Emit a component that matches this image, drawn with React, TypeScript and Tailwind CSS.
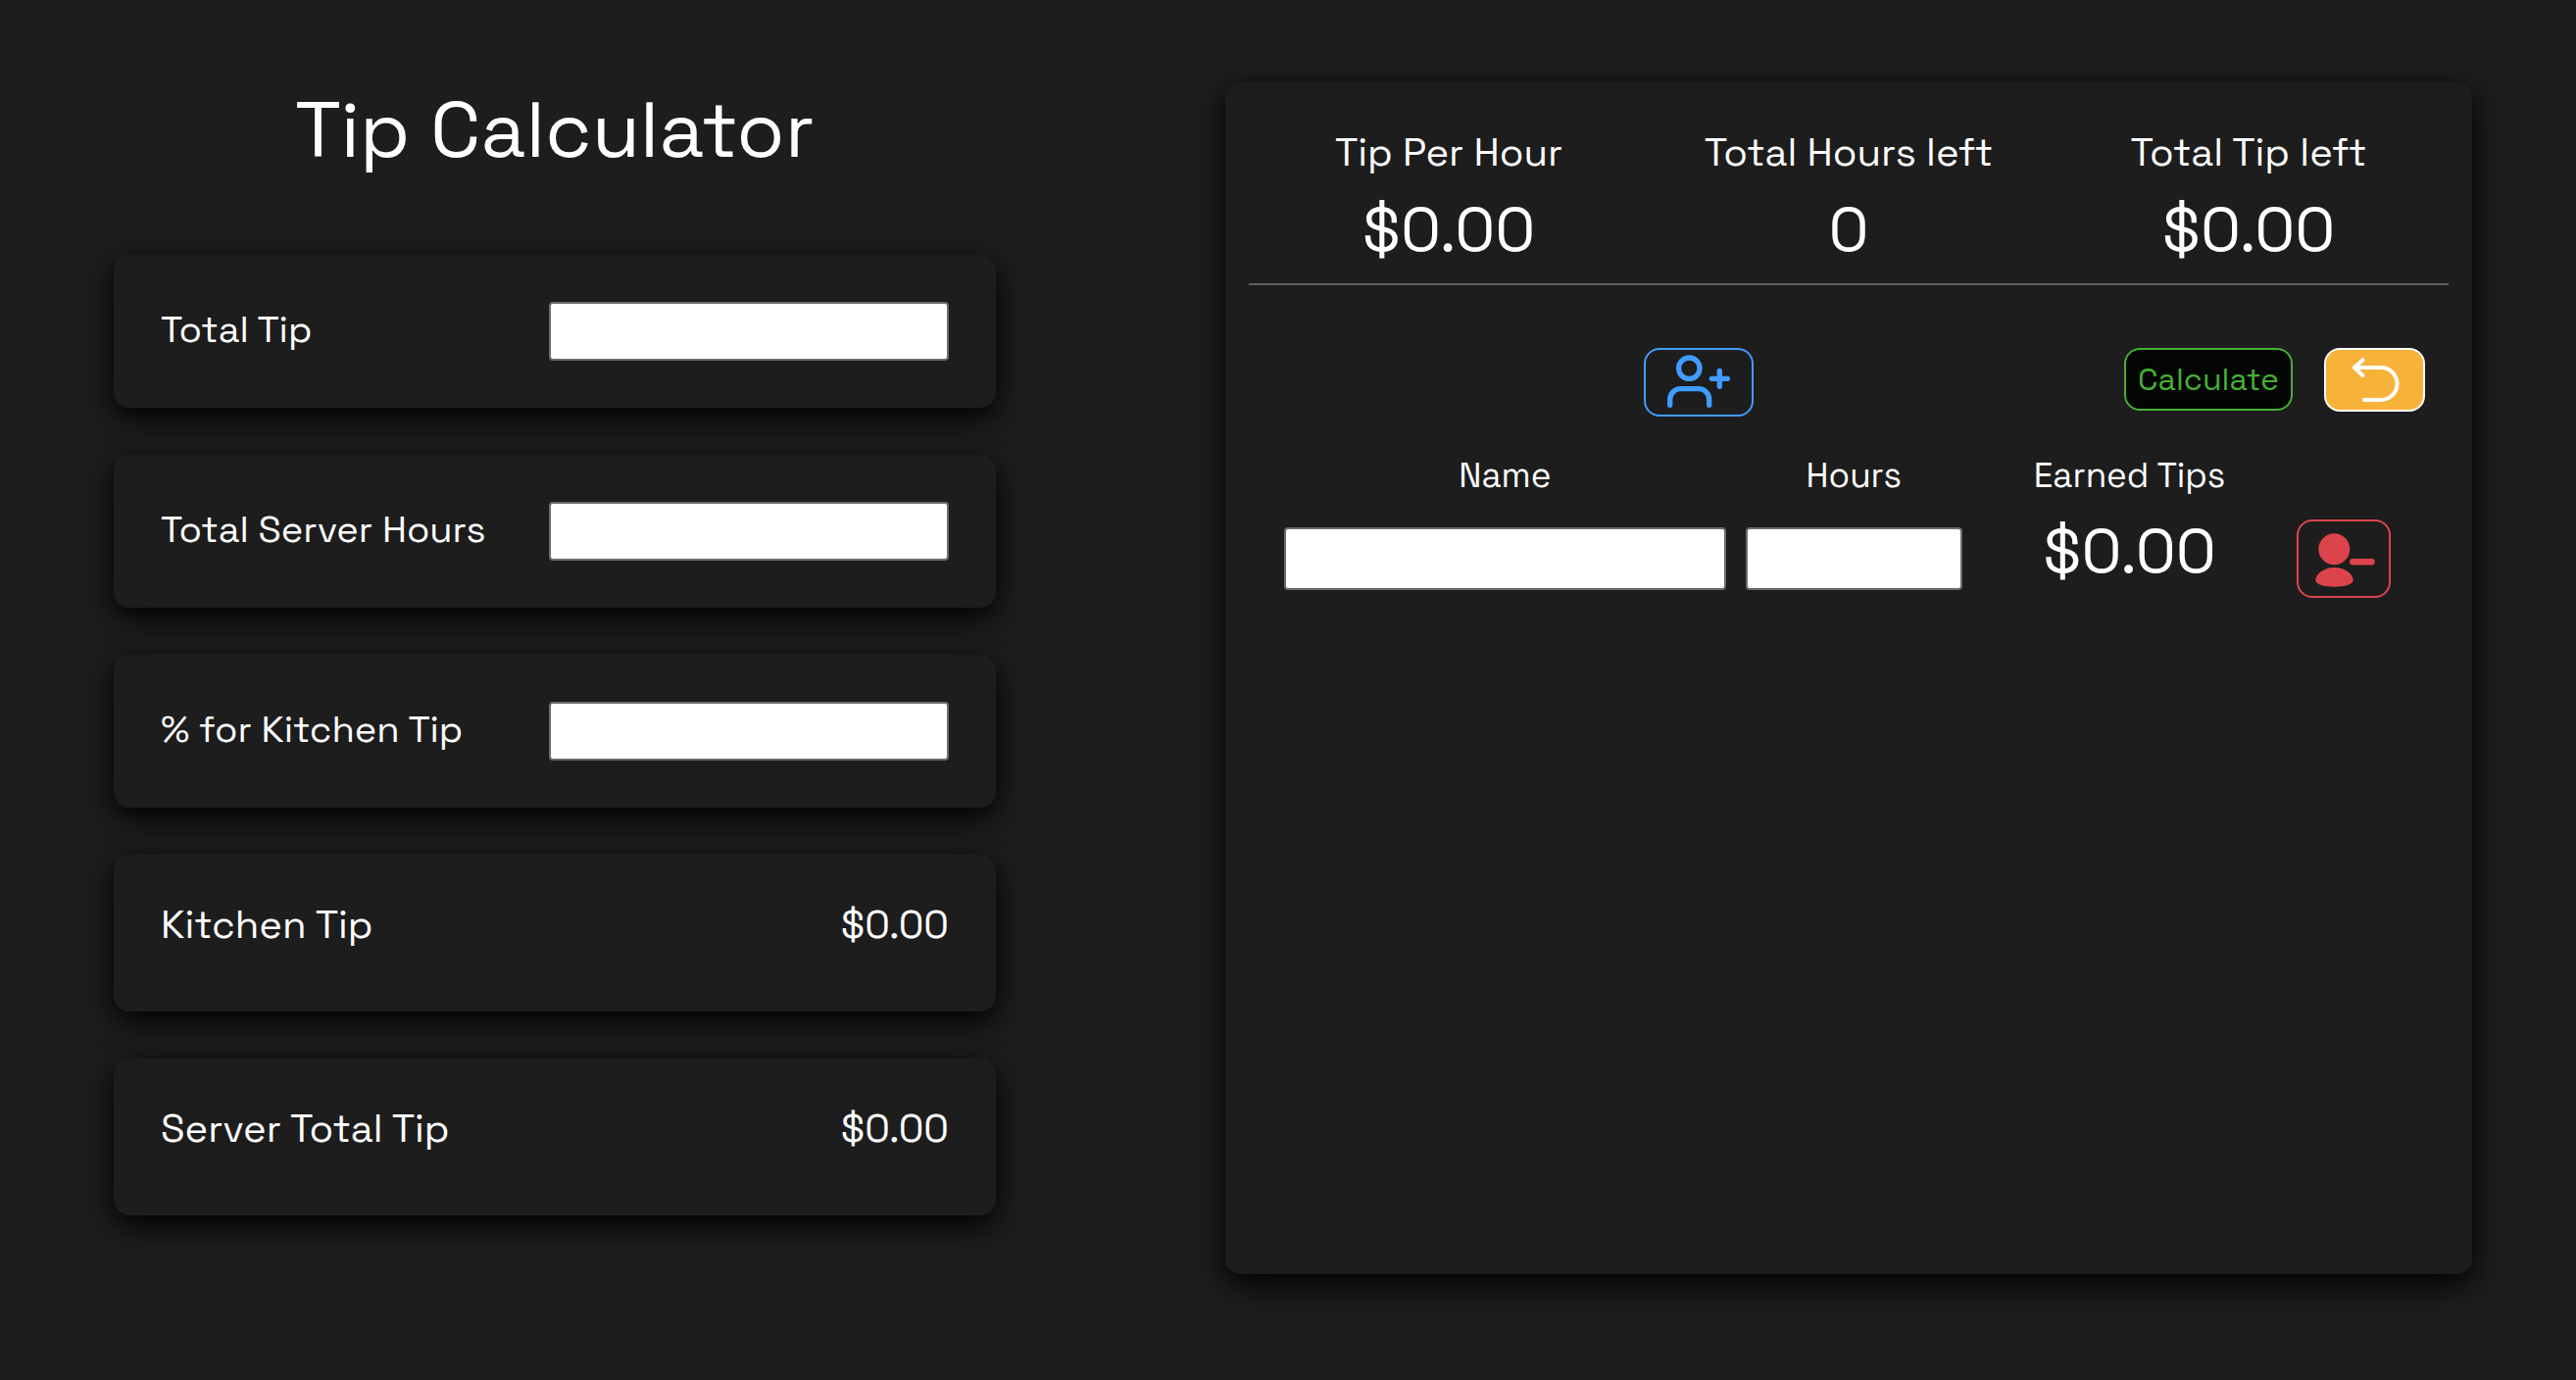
import { useState } from "react";
import type { ReactNode } from "react";

const cardShadow = "shadow-[0_10px_30px_#000]";

const inputStyle =
  "block w-full rounded-[4px] border-2 border-[#6b6b6b] bg-white px-2 text-[32px] leading-10 text-black";

function money(value: number) {
  return "$" + value.toFixed(2);
}

function AddUserIcon() {
  return (
    <svg viewBox="0 0 64 64" className="size-16" fill="none" stroke="currentColor" strokeWidth="5.33" strokeLinecap="round" strokeLinejoin="round" aria-hidden="true">
      <circle cx="22.3" cy="17.7" r="10.7" />
      <path d="M2.7 55.3V49.4A10.7 10.7 0 0 1 13.4 38.7H32A10.7 10.7 0 0 1 42.7 49.4V55.3" />
      <path d="M45.3 28.3H61.3M53.3 20.3V36.3" />
    </svg>
  );
}

function UndoIcon() {
  return (
    <svg viewBox="0 0 56 56" className="size-14" fill="none" stroke="currentColor" strokeWidth="4" strokeLinecap="round" aria-hidden="true">
      <path d="M7 15H34A16.5 16.5 0 0 1 34 48H17" />
      <path d="M15.5 7.2L7 15L15.5 23.2" strokeLinejoin="round" />
    </svg>
  );
}

function RemoveUserIcon() {
  return (
    <svg viewBox="0 0 64 64" className="size-16" fill="currentColor" aria-hidden="true">
      <circle cx="22.3" cy="22.3" r="16" />
      <path d="M22.5 41C33 41 41.7 47.5 41.7 54C41.7 58.2 33 60.7 22.5 60.7S3.3 58.2 3.3 54C3.3 47.5 12 41 22.5 41Z" />
      <rect x="38" y="32" width="25.7" height="6.4" rx="3.2" />
    </svg>
  );
}

function Card({ children }: { children: ReactNode }) {
  return <div className={"rounded-2xl bg-[#1d1d1d] p-12 " + cardShadow}>{children}</div>;
}

function FieldCard(props: { id: string; label: string; value: string; onChange: (v: string) => void }) {
  return (
    <Card>
      <div className="flex items-start justify-between">
        <label htmlFor={props.id} className="text-[38px] leading-[56px]">{props.label}</label>
        <div className="w-[408px]">
          <input id={props.id} value={props.value} onChange={(e) => props.onChange(e.target.value)} className={inputStyle + " h-[60px]"} />
        </div>
      </div>
    </Card>
  );
}

function ResultCard({ label, value }: { label: string; value: string }) {
  return (
    <Card>
      <div className="flex justify-between pb-4 text-[40px] leading-[48px]">
        <span>{label}</span>
        <span>{value}</span>
      </div>
    </Card>
  );
}

function Stat({ label, value }: { label: string; value: string }) {
  return (
    <div className="text-center">
      <div className="text-[40px] leading-[48px]">{label}</div>
      <div className="pt-[18px] text-[64px] leading-[72px]">{value}</div>
    </div>
  );
}

type Server = { id: number; name: string; hours: string };

export default function App() {
  const [tip, setTip] = useState("");
  const [hours, setHours] = useState("");
  const [percent, setPercent] = useState("");
  const [servers, setServers] = useState<Server[]>([{ id: 1, name: "", hours: "" }]);
  const [paid, setPaid] = useState<Record<number, number>>({});

  const total = Number(tip) || 0;
  const totalHours = Number(hours) || 0;
  const kitchen = (total * (Number(percent) || 0)) / 100;
  const serverTotal = total - kitchen;
  const perHour = totalHours > 0 ? serverTotal / totalHours : 0;
  const usedHours = servers.reduce((sum, s) => sum + (Number(s.hours) || 0), 0);
  const paidTotal = servers.reduce((sum, s) => sum + (paid[s.id] || 0), 0);

  const update = (id: number, change: Partial<Server>) =>
    setServers(servers.map((s) => (s.id === id ? { ...s, ...change } : s)));
  const calculate = () =>
    setPaid(Object.fromEntries(servers.map((s) => [s.id, (Number(s.hours) || 0) * perHour])));
  const reset = () => {
    setServers([{ id: 1, name: "", hours: "" }]);
    setPaid({});
  };

  return (
    <main className="grid min-h-screen grid-cols-[900fr_1272fr] gap-[234px] bg-[#1d1d1d] pt-[84px] pr-[106px] pb-[108px] pl-[116px] font-['Space_Grotesk','Inter',sans-serif] font-normal text-white">
      <section>
        <h1 className="text-center text-[80px] leading-[96px]">Tip Calculator</h1>
        <div className="flex flex-col gap-12 pt-20">
          <FieldCard id="total-tip" label="Total Tip" value={tip} onChange={setTip} />
          <FieldCard id="server-hours" label="Total Server Hours" value={hours} onChange={setHours} />
          <FieldCard id="kitchen-percent" label="% for Kitchen Tip" value={percent} onChange={setPercent} />
          <ResultCard label="Kitchen Tip" value={money(kitchen)} />
          <ResultCard label="Server Total Tip" value={money(serverTotal)} />
        </div>
      </section>

      <section className={"rounded-2xl bg-[#1d1d1d] px-6 pt-12 " + cardShadow}>
        <div className="grid grid-cols-3 border-b-2 border-[#5f5f5f] pb-[19px]">
          <Stat label="Tip Per Hour" value={money(perHour)} />
          <Stat label="Total Hours left" value={String(totalHours - usedHours)} />
          <Stat label="Total Tip left" value={money(serverTotal - paidTotal)} />
        </div>

        <div className="grid grid-cols-4 items-start pt-16">
          <div className="col-span-3 flex justify-center">
            <button type="button" aria-label="Add server" onClick={() => setServers([...servers, { id: Date.now(), name: "", hours: "" }])} className="flex h-[70px] w-28 items-center justify-center rounded-2xl border-2 border-[#409cff] text-[#409cff]">
              <AddUserIcon />
            </button>
          </div>
          <div className="flex justify-end gap-8 pr-6">
            <button type="button" onClick={calculate} className="h-16 w-[172px] shrink-0 rounded-2xl border-2 border-[#45b035] bg-[#020502] text-[32px] leading-10 text-[#45b035]">
              Calculate
            </button>
            <button type="button" aria-label="Reset" onClick={reset} className="flex h-[65px] w-[103px] shrink-0 items-center justify-center rounded-2xl border-2 border-white bg-[#f7b239]">
              <UndoIcon />
            </button>
          </div>
        </div>

        <div className="pt-9 pr-[50px] pl-[26px]">
          <table className="w-full table-fixed">
            <thead>
              <tr className="text-[35px] leading-[48px]">
                <th scope="col" className="w-[41%] p-0 font-normal">Name</th>
                <th scope="col" className="w-[21%] p-0 font-normal">Hours</th>
                <th scope="col" className="w-[28%] p-0 font-normal">Earned Tips</th>
                <td className="w-[10%] p-0" />
              </tr>
            </thead>
            <tbody>
              {servers.map((s) => (
                <tr key={s.id}>
                  <td className="px-[10px] pt-[21px]">
                    <input aria-label="Name" value={s.name} onChange={(e) => update(s.id, { name: e.target.value })} className={inputStyle + " h-16"} />
                  </td>
                  <td className="px-[10px] pt-[21px]">
                    <input aria-label="Hours" value={s.hours} onChange={(e) => update(s.id, { hours: e.target.value })} className={inputStyle + " h-16"} />
                  </td>
                  <td className="px-0 pt-1 text-center text-[64px] leading-[72px]">{money(paid[s.id] || 0)}</td>
                  <td className="px-[10px] pt-[21px]">
                    <button type="button" aria-label="Remove server" onClick={() => setServers(servers.filter((o) => o.id !== s.id))} className="flex h-20 w-24 items-center justify-center rounded-2xl border-2 border-[#dc444c] text-[#dc444c]">
                      <RemoveUserIcon />
                    </button>
                  </td>
                </tr>
              ))}
            </tbody>
          </table>
        </div>
      </section>
    </main>
  );
}
